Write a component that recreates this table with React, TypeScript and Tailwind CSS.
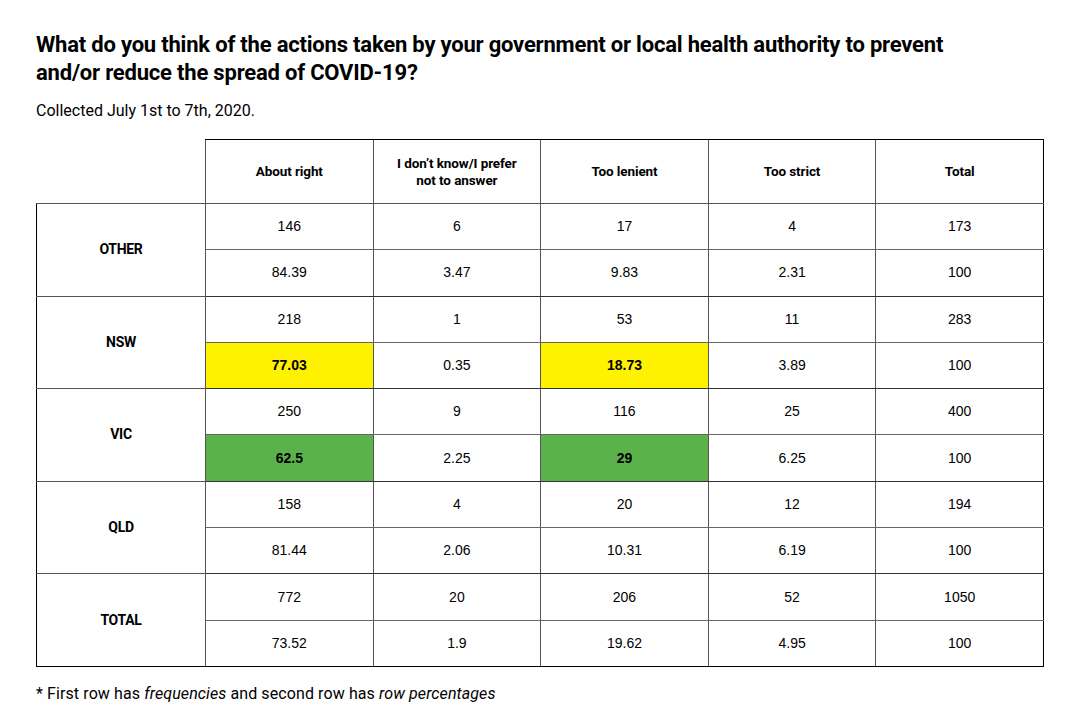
const rows = [
  {
    label: "OTHER",
    freq: ["146", "6", "17", "4", "173"],
    pct: ["84.39", "3.47", "9.83", "2.31", "100"],
  },
  {
    label: "NSW",
    freq: ["218", "1", "53", "11", "283"],
    pct: ["77.03", "0.35", "18.73", "3.89", "100"],
    hl: "bg-[#fff200]",
  },
  {
    label: "VIC",
    freq: ["250", "9", "116", "25", "400"],
    pct: ["62.5", "2.25", "29", "6.25", "100"],
    hl: "bg-[#5bb14a]",
  },
  {
    label: "QLD",
    freq: ["158", "4", "20", "12", "194"],
    pct: ["81.44", "2.06", "10.31", "6.19", "100"],
  },
  {
    label: "TOTAL",
    freq: ["772", "20", "206", "52", "1050"],
    pct: ["73.52", "1.9", "19.62", "4.95", "100"],
  },
];

const headers = ["About right", "I don’t know/I prefer not to answer", "Too lenient", "Too strict", "Total"];

const cond = "font-['Roboto',sans-serif]";

export default function App() {
  return (
    <div className="w-[1080px] h-[722px] bg-white text-black px-9 pt-[31px] font-['Liberation_Sans',Arial,sans-serif]">
      <h1 className={`${cond} font-bold text-[22px] leading-[28px] tracking-[-0.2px] w-[960px]`}>
        What do you think of the actions taken by your government or local health authority to prevent
        <br />
        and/or reduce the spread of COVID-19?
      </h1>
      <p className={`${cond} text-[16px] leading-5 mt-[14px]`}>Collected July 1st to 7th, 2020.</p>

      <table className="mt-[18px] w-[1008px] table-fixed border-collapse text-[14px]">
        <colgroup>
          <col className="w-[169px]" />
          <col />
          <col />
          <col />
          <col />
          <col />
        </colgroup>
        <thead>
          <tr className="h-[64px]">
            <th className="border-b border-b-[#555]" />
            {headers.map((h, i) => (
              <th
                key={h}
                className={`${cond} font-bold text-[13.5px] leading-[17px] tracking-[-0.1px] border-t border-t-black border-l border-l-[#555] px-3 ${
                  i === headers.length - 1 ? "border-r border-r-black" : ""
                } border-b border-b-[#555]`}
              >
                {i === 1 ? (
                  <>
                    I don’t know/I prefer
                    <br />
                    not to answer
                  </>
                ) : (
                  h
                )}
              </th>
            ))}
          </tr>
        </thead>
        <tbody>
          {rows.map((r, ri) => (
            <>
              <tr key={r.label + "a"} className="h-[46.3px]">
                <td
                  rowSpan={2}
                  className={`${cond} font-bold text-[14px] tracking-[-0.3px] text-center border-l border-l-black border-r border-r-[#555] ${
                    ri === rows.length - 1 ? "border-b border-b-black" : "border-b border-b-[#555]"
                  }`}
                >
                  {r.label}
                </td>
                {r.freq.map((v, i) => (
                  <td
                    key={i}
                    className={`text-center border-b border-b-[#666] border-l border-l-[#555] ${
                      i === 4 ? "border-r border-r-black" : ""
                    }`}
                  >
                    {v}
                  </td>
                ))}
              </tr>
              <tr key={r.label + "b"} className="h-[46.3px]">
                {r.pct.map((v, i) => {
                  const hot = r.hl && (i === 0 || i === 2);
                  return (
                    <td
                      key={i}
                      className={`text-center border-l border-l-[#555] ${
                        ri === rows.length - 1 ? "border-b border-b-black" : "border-b border-b-[#333]"
                      } ${i === 4 ? "border-r border-r-black" : ""} ${hot ? `${r.hl} font-bold` : ""}`}
                    >
                      {v}
                    </td>
                  );
                })}
              </tr>
            </>
          ))}
        </tbody>
      </table>

      <p className={`${cond} text-[16px] tracking-[0.1px] leading-5 mt-[17px]`}>
        * First row has <em>frequencies</em> and second row has <em>row percentages</em>
      </p>
    </div>
  );
}
